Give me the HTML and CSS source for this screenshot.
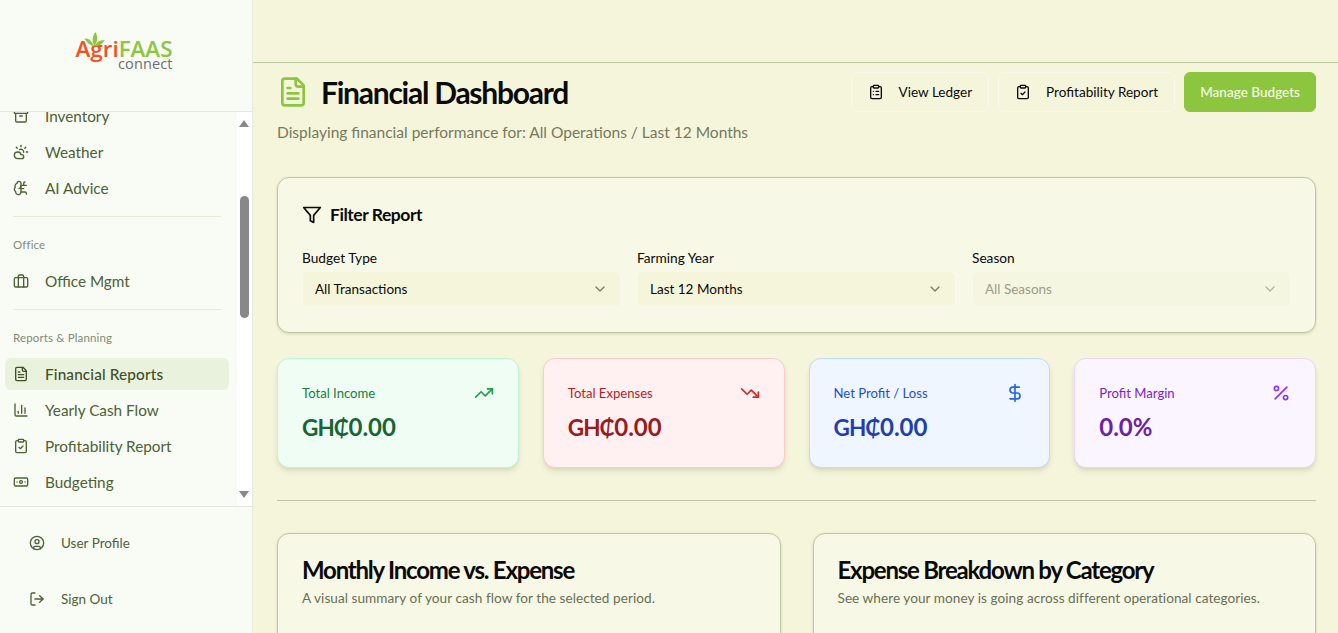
FILE: index.html
```html
<!DOCTYPE html>
<html lang="en">
<head>
<meta charset="utf-8">
<title>Financial Dashboard</title>
<link rel="stylesheet" href="styles.css">
</head>
<body>
<svg class="sprite" aria-hidden="true">
  <symbol id="i-file" viewBox="0 0 24 24"><path d="M15 2H6a2 2 0 0 0-2 2v16a2 2 0 0 0 2 2h12a2 2 0 0 0 2-2V7Z"/><path d="M14 2v4a2 2 0 0 0 2 2h4"/><path d="M10 9H8"/><path d="M16 13H8"/><path d="M16 17H8"/></symbol>
  <symbol id="i-list" viewBox="0 0 24 24"><rect x="8" y="2" width="8" height="4" rx="1"/><path d="M16 4h2a2 2 0 0 1 2 2v14a2 2 0 0 1-2 2H6a2 2 0 0 1-2-2V6a2 2 0 0 1 2-2h2"/><path d="M12 11h4"/><path d="M12 16h4"/><path d="M8 11h.01"/><path d="M8 16h.01"/></symbol>
  <symbol id="i-check" viewBox="0 0 24 24"><rect x="8" y="2" width="8" height="4" rx="1"/><path d="M16 4h2a2 2 0 0 1 2 2v14a2 2 0 0 1-2 2H6a2 2 0 0 1-2-2V6a2 2 0 0 1 2-2h2"/><path d="m9 14 2 2 4-4"/></symbol>
  <symbol id="i-funnel" viewBox="0 0 24 24"><polygon points="22 3 2 3 10 12.46 10 19 14 21 14 12.46 22 3"/></symbol>
  <symbol id="i-up" viewBox="0 0 24 24"><polyline points="22 7 13.5 15.5 8.5 10.5 2 17"/><polyline points="16 7 22 7 22 13"/></symbol>
  <symbol id="i-down" viewBox="0 0 24 24"><polyline points="22 17 13.5 8.5 8.5 13.5 2 7"/><polyline points="16 17 22 17 22 11"/></symbol>
  <symbol id="i-dollar" viewBox="0 0 24 24"><line x1="12" y1="2" x2="12" y2="22"/><path d="M17 5H9.5a3.5 3.5 0 0 0 0 7h5a3.5 3.5 0 0 1 0 7H6"/></symbol>
  <symbol id="i-percent" viewBox="0 0 24 24"><line x1="19" y1="5" x2="5" y2="19"/><circle cx="6.5" cy="6.5" r="2.5"/><circle cx="17.5" cy="17.5" r="2.5"/></symbol>
  <symbol id="i-chev" viewBox="0 0 24 24"><path d="m6 9 6 6 6-6"/></symbol>
  <symbol id="i-archive" viewBox="0 0 24 24"><rect x="2" y="3" width="20" height="5" rx="1"/><path d="M4 8v11a2 2 0 0 0 2 2h12a2 2 0 0 0 2-2V8"/><path d="M10 12h4"/></symbol>
  <symbol id="i-cloud" viewBox="0 0 24 24"><path d="M12 2v2"/><path d="m4.93 4.93 1.41 1.41"/><path d="M20 12h2"/><path d="m19.07 4.93-1.41 1.41"/><path d="M15.947 12.65a4 4 0 0 0-5.925-4.128"/><path d="M13 22H7a5 5 0 1 1 4.9-6H13a3 3 0 0 1 0 6Z"/></symbol>
  <symbol id="i-brain" viewBox="0 0 24 24"><path d="M12 5a3 3 0 1 0-5.997.125 4 4 0 0 0-2.526 5.77 4 4 0 0 0 .556 6.588A4 4 0 1 0 12 18Z"/><path d="M9 13a4.5 4.5 0 0 0 3-4"/><path d="M12 13h4"/><path d="M12 18h6a2 2 0 0 1 2 2v1"/><path d="M12 8h8"/><path d="M16 8V5a2 2 0 0 1 2-2"/></symbol>
  <symbol id="i-brief" viewBox="0 0 24 24"><rect x="2" y="7" width="20" height="14" rx="2"/><path d="M16 21V5a2 2 0 0 0-2-2h-4a2 2 0 0 0-2 2v16"/></symbol>
  <symbol id="i-bars" viewBox="0 0 24 24"><path d="M3 3v16a2 2 0 0 0 2 2h16"/><path d="M18 17V9"/><path d="M13 17V5"/><path d="M8 17v-3"/></symbol>
  <symbol id="i-bank" viewBox="0 0 24 24"><rect x="2" y="6" width="20" height="12" rx="2"/><circle cx="12" cy="12" r="2"/><path d="M6 12h.01M18 12h.01"/></symbol>
  <symbol id="i-user" viewBox="0 0 24 24"><circle cx="12" cy="12" r="10"/><circle cx="12" cy="10" r="3"/><path d="M7 20.662V19a2 2 0 0 1 2-2h6a2 2 0 0 1 2 2v1.662"/></symbol>
  <symbol id="i-out" viewBox="0 0 24 24"><path d="M9 21H5a2 2 0 0 1-2-2V5a2 2 0 0 1 2-2h4"/><polyline points="16 17 21 12 16 7"/><line x1="21" y1="12" x2="9" y2="12"/></symbol>
</svg>

<div class="app">
  <aside class="sidebar">
    <div class="logo">
      <div class="logo-mark">
        <svg class="logo-leaf" viewBox="0 0 24 18"><path d="M12 17C9 12 9 6 13 0c3 5 3 11-1 17Z"/><path d="M11 17C7 16 3 13 0 8c5-1 9 3 11 9Z"/><path d="M13 17c1-5 5-8 11-7-3 5-6 7-11 7Z"/></svg>
        <div class="logo-name"><span class="logo-agri">Agri</span><span class="logo-faas">FAAS</span></div>
        <div class="logo-sub">connect</div>
      </div>
    </div>
    <div class="nav-wrap">
      <nav class="nav">
        <a class="nav-item"><svg class="ico"><use href="#i-archive"/></svg>Inventory</a>
        <a class="nav-item"><svg class="ico"><use href="#i-cloud"/></svg>Weather</a>
        <a class="nav-item"><svg class="ico"><use href="#i-brain"/></svg>AI Advice</a>
        <hr class="nav-rule">
        <div class="nav-label">Office</div>
        <a class="nav-item"><svg class="ico"><use href="#i-brief"/></svg>Office Mgmt</a>
        <hr class="nav-rule">
        <div class="nav-label">Reports &amp; Planning</div>
        <a class="nav-item active"><svg class="ico"><use href="#i-file"/></svg>Financial Reports</a>
        <a class="nav-item"><svg class="ico"><use href="#i-bars"/></svg>Yearly Cash Flow</a>
        <a class="nav-item"><svg class="ico"><use href="#i-check"/></svg>Profitability Report</a>
        <a class="nav-item"><svg class="ico"><use href="#i-bank"/></svg>Budgeting</a>
      </nav>
      <div class="scrollbar">
        <span class="arrow-up"></span>
        <span class="thumb"></span>
        <span class="arrow-down"></span>
      </div>
    </div>
    <div class="side-foot">
      <a class="foot-item"><svg class="ico"><use href="#i-user"/></svg>User Profile</a>
      <a class="foot-item"><svg class="ico"><use href="#i-out"/></svg>Sign Out</a>
    </div>
  </aside>

  <main class="main">
    <header class="topbar"></header>
    <div class="content">
      <div class="page-head">
        <div>
          <h1 class="page-title"><svg class="title-ico"><use href="#i-file"/></svg>Financial Dashboard</h1>
          <p class="page-sub">Displaying financial performance for: All Operations / Last 12 Months</p>
        </div>
        <div class="actions">
          <a class="btn"><svg class="ico"><use href="#i-list"/></svg>View Ledger</a>
          <a class="btn"><svg class="ico"><use href="#i-check"/></svg>Profitability Report</a>
          <a class="btn primary">Manage Budgets</a>
        </div>
      </div>

      <section class="card filter">
        <h2 class="filter-title"><svg class="funnel"><use href="#i-funnel"/></svg>Filter Report</h2>
        <div class="filter-grid">
          <div class="field"><label class="field-label">Budget Type</label><div class="select"><span>All Transactions</span><svg class="chev"><use href="#i-chev"/></svg></div></div>
          <div class="field"><label class="field-label">Farming Year</label><div class="select"><span>Last 12 Months</span><svg class="chev"><use href="#i-chev"/></svg></div></div>
          <div class="field"><label class="field-label">Season</label><div class="select disabled"><span>All Seasons</span><svg class="chev"><use href="#i-chev"/></svg></div></div>
        </div>
      </section>

      <section class="stats">
        <div class="stat green"><div class="stat-head"><span>Total Income</span><svg class="stat-ico"><use href="#i-up"/></svg></div><div class="stat-val"><span class="cur">GH₵</span>0.00</div></div>
        <div class="stat red"><div class="stat-head"><span>Total Expenses</span><svg class="stat-ico"><use href="#i-down"/></svg></div><div class="stat-val"><span class="cur">GH₵</span>0.00</div></div>
        <div class="stat blue"><div class="stat-head"><span>Net Profit / Loss</span><svg class="stat-ico"><use href="#i-dollar"/></svg></div><div class="stat-val"><span class="cur">GH₵</span>0.00</div></div>
        <div class="stat purple"><div class="stat-head"><span>Profit Margin</span><svg class="stat-ico"><use href="#i-percent"/></svg></div><div class="stat-val">0.0%</div></div>
      </section>

      <hr class="section-rule">

      <section class="charts">
        <div class="card chart"><h3 class="chart-title">Monthly Income vs. Expense</h3><p class="chart-sub">A visual summary of your cash flow for the selected period.</p></div>
        <div class="card chart"><h3 class="chart-title">Expense Breakdown by Category</h3><p class="chart-sub">See where your money is going across different operational categories.</p></div>
      </section>
    </div>
  </main>
</div>
</body>
</html>
```

FILE: styles.css
```css
* { box-sizing: border-box; }
html, body { margin: 0; height: 100%; overflow: hidden; }
body { font-family: "Lato", "Noto Sans", sans-serif; background: #f5f5dc; color: #0a0a0a; }
.sprite { display: none; }
svg { fill: none; stroke: currentColor; stroke-width: 2; stroke-linecap: round; stroke-linejoin: round; flex: none; }
.ico { width: 16px; height: 16px; }

.app { display: flex; height: 633px; overflow: hidden; }

/* Sidebar */
.sidebar { width: 253px; flex: none; display: flex; flex-direction: column; background: #f9fbf5; border-right: 1px solid #e6eadb; color: #4d6133; }
.logo { height: 112px; flex: none; display: flex; justify-content: center; padding: 31px 4px 0 0; border-bottom: 1px solid #e4e8d9; }
.logo-mark { width: 97px; display: flex; flex-direction: column; align-items: flex-end; position: relative; padding-top: 8px; }
.logo-leaf { position: absolute; left: 8px; top: 1px; width: 21px; height: 15px; fill: #8cc63f; stroke: none; }
.logo-name { font-family: "Open Sans", sans-serif; font-size: 22.4px; line-height: 20px; font-weight: 600; white-space: nowrap; }
.logo-agri { color: #f4511e; }
.logo-faas { color: #8cc63f; }
.logo-sub { font-family: "Open Sans", sans-serif; font-size: 14.5px; line-height: 10px; color: #6e6e73; letter-spacing: 0.1px; }

.nav-wrap { flex: 1; min-height: 0; display: flex; overflow: hidden; position: relative; }
.nav { flex: 1; min-width: 0; margin-top: -12px; padding: 0 8px 0 5px; display: flex; flex-direction: column; gap: 4px; }
.nav-item { height: 32px; flex: none; display: flex; align-items: center; gap: 16px; padding-left: 8px; border-radius: 6px; font-size: 15.3px; }
.nav-item.active { background: #e8f2dc; color: #3f4f29; font-weight: 500; letter-spacing: 0.15px; }
.nav-rule { height: 1px; border: 0; margin: 8px 8px 0; background: #e6eadb; width: auto; flex: none; }
.nav-label { height: 44px; flex: none; padding: 16px 8px 0; margin-bottom: -4px; font-size: 11.5px; letter-spacing: 0.15px; line-height: 16px; color: #828c72; }

.scrollbar { width: 15px; flex: none; background: #fff; display: flex; flex-direction: column; align-items: center; position: relative; }
.thumb { position: absolute; top: 84px; left: 3px; width: 9px; height: 122px; background: #888; border-radius: 5px; }
.arrow-up, .arrow-down { position: absolute; left: 2px; width: 0; height: 0; border-left: 5.5px solid transparent; border-right: 5.5px solid transparent; }
.arrow-up { top: 8px; border-bottom: 7px solid #888; }
.arrow-down { bottom: 8px; border-top: 7px solid #888; }

.side-foot { height: 127px; flex: none; padding: 16px 0 0 29px; border-top: 1px solid #e4e8d9; display: flex; flex-direction: column; gap: 16px; }
.foot-item { height: 40px; display: flex; align-items: center; gap: 16px; font-size: 13.5px; }

/* Main */
.main { flex: 1; min-width: 0; display: flex; flex-direction: column; }
.topbar { height: 63px; flex: none; border-bottom: 1px solid #bcc9a0; }
.content { padding: 10px 22px 0 24px; }
.page-head { display: flex; justify-content: space-between; align-items: flex-start; height: 104px; }
.page-title { margin: 0; height: 38px; display: flex; align-items: center; gap: 12px; font-size: 30px; line-height: 36px; font-weight: 700; letter-spacing: -1.25px; color: #0a0a0a; }
.title-ico { width: 32px; height: 32px; color: #8cc63f; }
.page-sub { margin: 9px 0 0; font-size: 15.5px; line-height: 24px; color: #767a5c; }
.actions { display: flex; gap: 9px; margin-top: -1px; }
.btn { height: 40px; display: flex; align-items: center; gap: 15px; padding: 0 16px; border: 1px solid #f8f9ea; border-radius: 6px; font-size: 13.55px; color: #0a0a0a; }
.btn.primary { padding: 0 15px; background: #8cc63f; border-color: #8cc63f; color: #f7fbe9; font-weight: 500; }

.card { background: #f7f8e6; border: 1px solid #bcc9a0; border-radius: 12px; box-shadow: 0 1px 3px rgba(80, 90, 40, .2); }
.filter { height: 156px; padding: 24px; }
.filter-title { margin: -1px 0 0; height: 28px; display: flex; align-items: center; gap: 8px; font-size: 17.5px; line-height: 28px; font-weight: 700; letter-spacing: -0.45px; }
.funnel { width: 20px; height: 20px; }
.filter-grid { display: grid; grid-template-columns: repeat(3, 1fr); gap: 16px; margin-top: 19px; }
.field-label { display: block; font-size: 13.7px; line-height: 20px; margin-bottom: 3px; }
.select { height: 36px; display: flex; align-items: center; justify-content: space-between; padding: 0 12px; border: 1px solid #f8f9ea; border-radius: 6px; background: #f5f5dc; font-size: 13.5px; }
.select.disabled { color: #9a9c8c; background: #f5f6e1; }
.chev { width: 16px; height: 16px; color: #7c7e6c; }
.disabled .chev { color: #b4b6a4; }

.stats { display: grid; grid-template-columns: repeat(4, 1fr); gap: 24px; margin-top: 25px; }
.stat { height: 110px; padding: 24px; border: 1px solid; border-radius: 12px; box-shadow: 0 4px 6px -1px rgba(80, 90, 40, .14), 0 2px 4px -2px rgba(80, 90, 40, .14); }
.stat-head { height: 20px; display: flex; align-items: center; justify-content: space-between; font-size: 13.1px; }
.stat-ico { width: 20px; height: 20px; }
.stat-val { margin-top: 8px; font-size: 24px; line-height: 32px; font-weight: 700; }
.cur { font-size: 22.5px; letter-spacing: -0.9px; }
.green { background: #f0fdf4; border-color: #bbf7d0; color: #15803d; }
.green .stat-val { color: #166534; }
.green .stat-ico { color: #16a34a; }
.red { background: #fff1f2; border-color: #fecaca; color: #b91c1c; }
.red .stat-val { color: #991b1b; }
.red .stat-ico { color: #dc2626; }
.blue { background: #eff6ff; border-color: #bfdbfe; color: #1d4ed8; }
.blue .stat-val { color: #1e40af; }
.blue .stat-ico { color: #2563eb; }
.purple { background: #faf5ff; border-color: #e9d5ff; color: #7e22ce; }
.purple .stat-val { color: #6b21a8; }
.purple .stat-ico { color: #9333ea; }

.section-rule { height: 1px; border: 0; margin: 32px 0; background: #bcc9a0; }

.charts { display: grid; grid-template-columns: repeat(2, 1fr); gap: 32px; }
.chart { height: 300px; padding: 24px; }
.chart-title { margin: 0; font-size: 24px; line-height: 24px; font-weight: 700; letter-spacing: -1.22px; }
.chart-sub { margin: 6px 0 0; font-size: 13.6px; letter-spacing: 0.05px; line-height: 20px; color: #6b6f54; }
```
